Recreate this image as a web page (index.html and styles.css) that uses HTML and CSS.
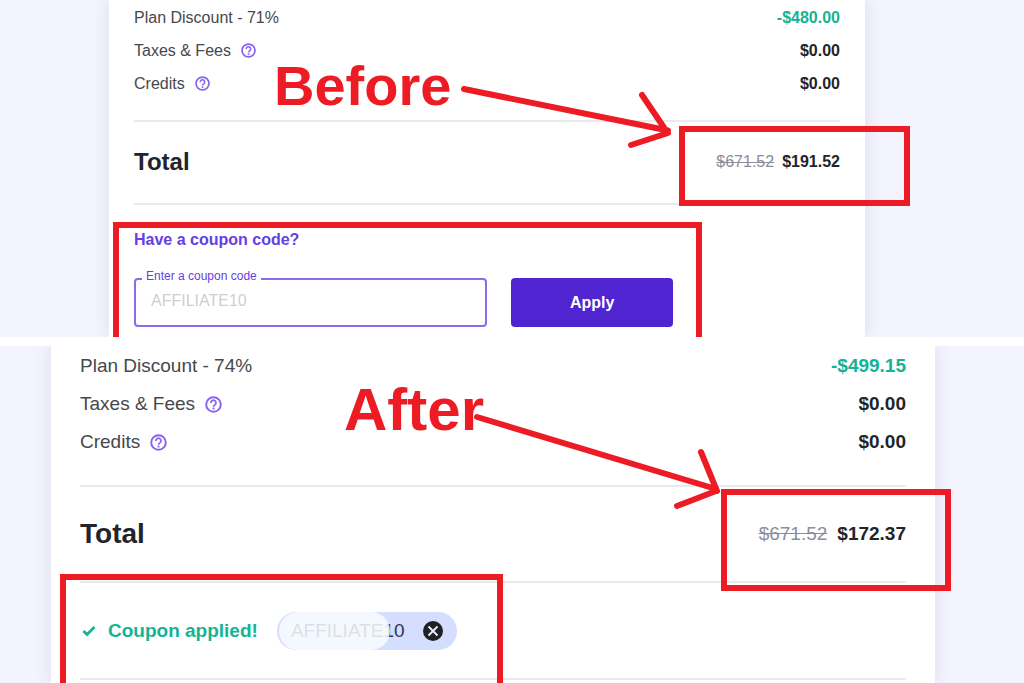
FILE: index.html
```html
<!DOCTYPE html>
<html lang="en">
<head>
<meta charset="utf-8">
<meta name="viewport" content="width=device-width, initial-scale=1">
<title>Coupon: before and after</title>
<link rel="stylesheet" href="styles.css">
</head>
<body>
<svg class="defs" aria-hidden="true">
  <symbol id="help" viewBox="0 0 24 24">
    <circle cx="12" cy="12" r="10.3" fill="none" stroke="currentColor" stroke-width="2.8"/>
    <path d="M8.300 9.800a3.600 3.600 0 1 1 5.700 2.700c-1.300.9-2 1.400-2 2.700" fill="none" stroke="currentColor" stroke-width="2.500"/>
    <rect x="10.7" y="16.4" width="2.600" height="2.600" fill="currentColor"/>
  </symbol>
</svg>
<main class="page">
  <section class="panel panel-before">
    <div class="card">
      <dl class="rows">
        <div class="row"><dt>Plan Discount - 71%</dt><dd class="discount">-$480.00</dd></div>
        <div class="row"><dt>Taxes &amp; Fees <svg class="help"><use href="#help"/></svg></dt><dd>$0.00</dd></div>
        <div class="row"><dt>Credits <svg class="help"><use href="#help"/></svg></dt><dd>$0.00</dd></div>
      </dl>
      <div class="total">
        <h2>Total</h2>
        <p class="prices"><s>$671.52</s><strong>$191.52</strong></p>
      </div>
      <form class="coupon">
        <h3>Have a coupon code?</h3>
        <div class="coupon-fields">
          <div class="field">
            <label for="code">Enter a coupon code</label>
            <input id="code" type="text" placeholder="AFFILIATE10">
          </div>
          <button class="apply" type="button">Apply</button>
        </div>
      </form>
    </div>
    <svg class="notes">
      <text x="274" y="105">Before</text>
      <path d="M464 89 668 130.500M642 95l25 37M631 145l37-12"/>
      <rect x="682" y="129" width="225" height="74"/>
      <rect x="116" y="225" width="583" height="150"/>
    </svg>
  </section>
  <section class="panel panel-after">
    <div class="card">
      <dl class="rows">
        <div class="row"><dt>Plan Discount - 74%</dt><dd class="discount">-$499.15</dd></div>
        <div class="row"><dt>Taxes &amp; Fees <svg class="help"><use href="#help"/></svg></dt><dd>$0.00</dd></div>
        <div class="row"><dt>Credits <svg class="help"><use href="#help"/></svg></dt><dd>$0.00</dd></div>
      </dl>
      <div class="total">
        <h2>Total</h2>
        <p class="prices"><s>$671.52</s><strong>$172.37</strong></p>
      </div>
      <div class="applied">
        <svg class="check" viewBox="0 0 14 12"><path d="M1.500 6 5 9.500 12.500 2" fill="none" stroke="currentColor" stroke-width="2.800"/></svg>
        <strong>Coupon applied!</strong>
        <div class="chip">
          <span>AFFILIATE10</span>
          <button type="button" aria-label="Remove coupon">
            <svg viewBox="0 0 20 20"><circle cx="10" cy="10" r="10" fill="#202124"/><path d="M5.500 5.500l9 9M14.500 5.500l-9 9" stroke="#e4e9fb" stroke-width="2"/></svg>
          </button>
        </div>
      </div>
    </div>
    <svg class="notes">
      <text x="344" y="84">After</text>
      <path d="M477 71 716 143M701 106l16 39M677 160l39-15"/>
      <rect x="724" y="146" width="224" height="96"/>
      <rect x="63" y="231" width="437" height="150"/>
    </svg>
  </section>
</main>
</body>
</html>
```
FILE: styles.css
```css
* { box-sizing: border-box; }

body {
  margin: 0;
  background: #fff;
  color: #212529;
  font-family: "Liberation Sans", Arial, sans-serif;
}

h2, h3, p, dl, dd { margin: 0; }

.defs { position: absolute; width: 0; height: 0; }

.page {
  display: flex;
  flex-direction: column;
  gap: 9px;
  min-height: 100vh;
  overflow: hidden;
}

.panel {
  position: relative;
  display: flex;
  overflow: hidden;
  background: #f4f4ff;
}

.panel-before {
  --icon: 15px;
  --row: 33px;
  --rule-gap: 20px;
  --total-row: 83px;
  padding: 0 159px 0 109px;
  font-size: 16px;
}

.panel-after {
  --icon: 17px;
  --row: 38px;
  --rule-gap: 24px;
  --total-row: 96px;
  flex: 1;
  padding: 0 89px 0 51px;
  font-size: 19px;
}

.card {
  flex: 1;
  padding: 1px 25px 0;
  background: #fff;
  box-shadow: 0 0 16px rgba(60, 60, 110, 0.13);
}

.panel-after .card { padding: 1px 29px 0; }

.row {
  display: flex;
  align-items: center;
  justify-content: space-between;
  height: var(--row);
}

.row dt {
  display: flex;
  align-items: center;
  gap: 10px;
  color: #45484d;
}

.row dd { font-weight: 700; }
.row .discount { color: #14b394; }

.help {
  width: var(--icon);
  height: var(--icon);
  color: #8a63ee;
}

.total {
  display: flex;
  align-items: center;
  justify-content: space-between;
  height: var(--total-row);
  margin-top: var(--rule-gap);
  border-top: 2px solid #e9eaec;
}

.panel-before .total { padding-bottom: 2px; }

.total h2 { font-size: 24px; }
.panel-after .total h2 { font-size: 28px; }

.prices { display: flex; gap: 8px; }
.panel-after .prices { gap: 10px; }
.prices s { color: #8b8d9a; }

.coupon {
  padding: 25px 0 10px;
  border-top: 2px solid #e9eaec;
}

.coupon h3 {
  color: #673de6;
  font-size: 16px;
  line-height: 20px;
}

.coupon-fields {
  display: grid;
  grid-template-columns: 50% 23%;
  gap: 24px;
  height: 49px;
  margin-top: 28px;
}

.field { position: relative; display: flex; }

.field label {
  position: absolute;
  top: -9px;
  left: 8px;
  padding: 0 4px;
  background: #fff;
  color: #673de6;
  font-size: 12px;
  line-height: 14px;
}

.field input {
  width: 100%;
  padding: 0 15px 3px;
  border: 2px solid #8c69f0;
  border-radius: 4px;
  background: #fff;
  font: inherit;
}

.field input::placeholder { color: #cfcfd1; }

.apply {
  border: 0;
  border-radius: 4px;
  background: #5025d1;
  color: #fff;
  font: inherit;
  font-weight: 700;
}

.applied {
  display: flex;
  align-items: center;
  height: 99px;
  border: solid #e9eaec;
  border-width: 2px 0;
  color: #14b394;
}

.check { width: 14px; height: 12px; margin: 0 12px 0 2px; }

.chip {
  position: relative;
  display: flex;
  align-items: center;
  gap: 18px;
  height: 38px;
  margin-left: 19px;
  padding: 0 14px;
  border-radius: 19px;
  background: #d5deff;
  color: #36344d;
}

.chip::after {
  content: "";
  position: absolute;
  top: 0;
  left: 2px;
  width: 111px;
  height: 38px;
  border-radius: 19px;
  background: rgba(249, 251, 255, 0.86);
}

.chip button {
  width: 20px;
  height: 20px;
  padding: 0;
  border: 0;
  background: none;
}

.chip svg { display: block; }

.notes {
  position: absolute;
  inset: 0;
  width: 100%;
  height: 100%;
  pointer-events: none;
  fill: none;
  stroke: #ed1c24;
  stroke-width: 6px;
  stroke-linecap: round;
}

.notes text {
  fill: #ed1c24;
  stroke: none;
  font-size: 56px;
  font-weight: 700;
}

.panel-after .notes text { font-size: 60px; }
```
